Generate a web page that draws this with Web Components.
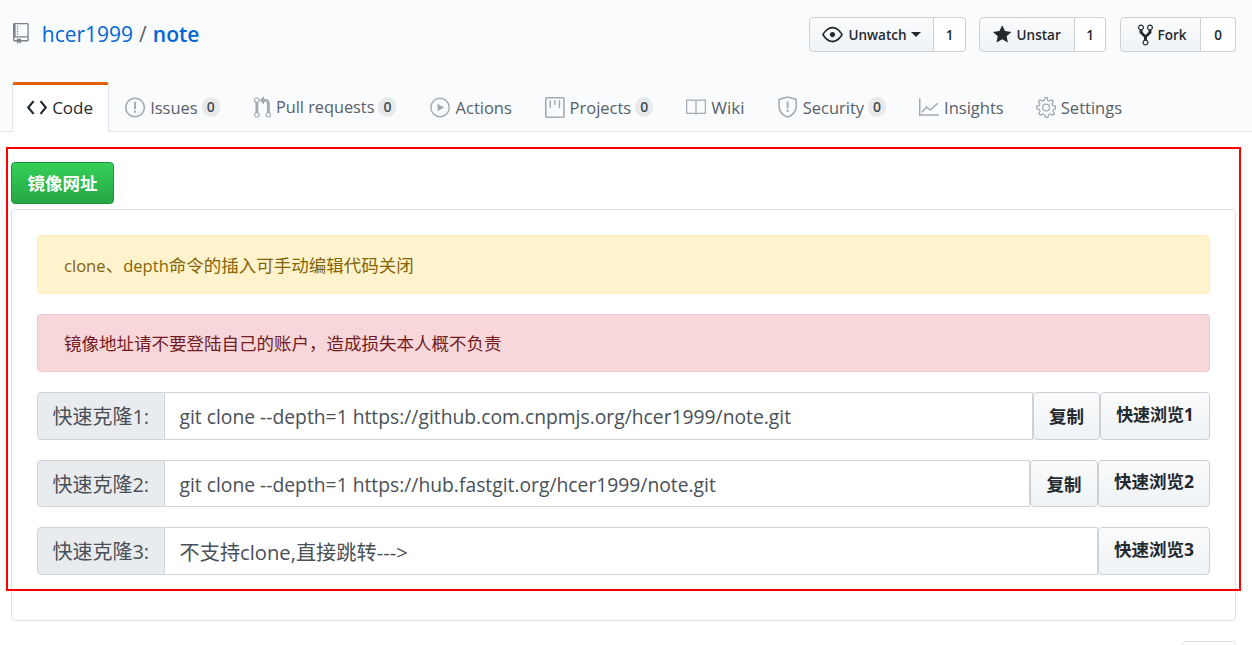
<!doctype html>
<html lang="zh-CN">
<head>
<meta charset="utf-8">
<title>hcer1999/note</title>
<style>
  html, body { margin: 0; height: 645px; overflow: hidden; background: #fff; }
  body { position: relative; font-family: "Open Sans", "Noto Sans CJK SC", sans-serif; color: #24292e; }
  .latin { font-size: 16.6px; }
</style>
</head>
<body>
<repo-header>
  <gh-action slot="actions" icon="eye" icon-size="21" count="1" caret main-width="125" count-width="32">Unwatch</gh-action>
  <gh-action slot="actions" icon="star" icon-size="21" count="1" main-width="96" count-width="31">Unstar</gh-action>
  <gh-action slot="actions" icon="fork" icon-size="24" count="0" main-width="81" count-width="35" style="margin-left:1px;--main-pad:3px">Fork</gh-action>
  <repo-tab slot="tabs" icon="code" icon-size="23" active style="font-size:17px;padding-right:15px">Code</repo-tab>
  <repo-tab slot="tabs" icon="issue" icon-size="23" count="0" style="margin-left:-1px">Issues</repo-tab>
  <repo-tab slot="tabs" icon="pr" icon-size="23" count="0" style="font-size:16.3px;padding:0 16px 2px">Pull requests</repo-tab>
  <repo-tab slot="tabs" icon="play" icon-size="23">Actions</repo-tab>
  <repo-tab slot="tabs" icon="project" icon-size="21" count="0">Projects</repo-tab>
  <repo-tab slot="tabs" icon="book" icon-size="20" style="font-size:17px">Wiki</repo-tab>
  <repo-tab slot="tabs" icon="shield" icon-size="22" count="0" style="margin-left:1px">Security</repo-tab>
  <repo-tab slot="tabs" icon="graph" icon-size="20">Insights</repo-tab>
  <repo-tab slot="tabs" icon="gear" icon-size="23" style="margin-left:-1px">Settings</repo-tab>
</repo-header>

<mirror-panel>
  <alert-box kind="warning" style="line-height:59px"><span class="latin">clone</span>、<span class="latin">depth</span>命令的插入可手动编辑代码关闭</alert-box>
  <alert-box kind="danger">镜像地址请不要登陆自己的账户，造成损失本人概不负责</alert-box>
  <clone-row label="快速克隆1:" copy copy-width="67" browse="快速浏览1" browse-width="110" browse-size="17" value-size="19.3">git clone --depth=1 https://github.com.cnpmjs.org/hcer1999/note.git</clone-row>
  <clone-row label="快速克隆2:" copy copy-width="68" browse="快速浏览2" browse-width="112" value-size="19.3">git clone --depth=1 https://hub.fastgit.org/hcer1999/note.git</clone-row>
  <clone-row label="快速克隆3:" browse="快速浏览3" browse-width="112" value-size="20.2">不支持clone,直接跳转---&gt;</clone-row>
</mirror-panel>

<red-outline></red-outline>

<script>
const ICONS = {
  repo: [12, 16, '<path fill="currentColor" d="M4 9H3V8h1v1zm0-3H3v1h1V6zm0-2H3v1h1V4zm0-2H3v1h1V2zm8-1v12c0 .55-.45 1-1 1H6v2l-1.5-1.5L3 16v-2H1c-.55 0-1-.45-1-1V1c0-.55.45-1 1-1h10c.55 0 1 .45 1 1zm-1 10H1v2h2v-1h3v1h5v-2zm0-10H2v9h9V1z"/>'],
  eye: [16, 16, '<path fill="currentColor" d="M8.06 2C3 2 0 8 0 8s3 6 8.06 6C13 14 16 8 16 8s-3-6-7.94-6zM8 12.6c-2.9 0-5.5-2.7-6.5-4.6 1-1.9 3.6-4.6 6.5-4.6s5.5 2.7 6.5 4.6c-1 1.9-3.6 4.6-6.5 4.6zM10 8c0 1.11-.89 2-2 2-1.11 0-2-.89-2-2 0-1.11.89-2 2-2 1.11 0 2 .89 2 2z"/>'],
  star: [14, 16, '<path fill="currentColor" d="M14 6l-4.9-.64L7 1 4.9 5.36 0 6l3.6 3.26L2.67 14 7 11.67 11.33 14l-.93-4.74L14 6z"/>'],
  fork: [10, 16, '<path fill="currentColor" d="M8 1a1.993 1.993 0 00-1 3.72V6L5 8 3 6V4.72A1.993 1.993 0 002 1a1.993 1.993 0 00-1 3.72V6.5l3 3v1.78A1.993 1.993 0 005 15a1.993 1.993 0 001-3.72V9.5l3-3V4.72A1.993 1.993 0 008 1zM2 4.2C1.34 4.2.8 3.65.8 3c0-.65.55-1.2 1.2-1.2.65 0 1.2.55 1.2 1.2 0 .65-.55 1.2-1.2 1.2zm3 10c-.66 0-1.2-.55-1.2-1.2 0-.65.55-1.2 1.2-1.2.65 0 1.2.55 1.2 1.2 0 .65-.55 1.2-1.2 1.2zm3-10c-.66 0-1.2-.55-1.2-1.2 0-.65.55-1.2 1.2-1.2.65 0 1.2.55 1.2 1.2 0 .65-.55 1.2-1.2 1.2z"/>'],
  code: [14, 16, '<path fill="none" stroke="currentColor" stroke-width="1.5" d="M4.6 3.6L.9 8l3.7 4.4M9.4 3.6L13.1 8l-3.7 4.4"/>'],
  issue: [14, 16, '<path fill="currentColor" d="M7 2.1c3.26 0 5.9 2.64 5.9 5.9s-2.64 5.9-5.9 5.9A5.91 5.91 0 011.1 8c0-3.26 2.64-5.9 5.9-5.9zM7 1C3.14 1 0 4.14 0 8s3.14 7 7 7 7-3.14 7-7-3.14-7-7-7zm.7 3H6.3v5h1.4V4zm0 6H6.3v1.6h1.4V10z"/>'],
  pr: [12, 16, '<path fill="currentColor" d="M11 11.28V5c-.03-.78-.34-1.47-.94-2.06C9.46 2.35 8.78 2.03 8 2H7V0L4 3l3 3V4h1c.27.02.48.11.69.31.21.2.3.42.31.69v6.28A1.993 1.993 0 0010 15a1.993 1.993 0 001-3.72zm-1 2.92c-.66 0-1.2-.55-1.2-1.2 0-.65.55-1.2 1.2-1.2.65 0 1.2.55 1.2 1.2 0 .65-.55 1.2-1.2 1.2zM4 3c0-1.11-.89-2-2-2a1.993 1.993 0 00-1 3.72v6.56A1.993 1.993 0 002 15a1.993 1.993 0 001-3.72V4.72c.59-.34 1-.98 1-1.72zm-.8 10c0 .66-.55 1.2-1.2 1.2-.65 0-1.2-.55-1.2-1.2 0-.65.55-1.2 1.2-1.2.65 0 1.2.55 1.2 1.2zM2 4.2C1.34 4.2.8 3.65.8 3c0-.65.55-1.2 1.2-1.2.65 0 1.2.55 1.2 1.2 0 .65-.55 1.2-1.2 1.2z"/>'],
  play: [14, 16, '<circle cx="7" cy="8" r="6.4" fill="none" stroke="currentColor" stroke-width="1"/><path fill="currentColor" d="M5.2 5.4v5.2L9.8 8z"/>'],
  project: [15, 16, '<rect x=".6" y=".6" width="13.8" height="14.8" rx=".6" fill="none" stroke="currentColor" stroke-width="1.2"/><path fill="none" stroke="currentColor" stroke-width="1.1" d="M4 2.5v6M7.5 2.5v3.5M11 2.5v6"/>'],
  book: [16, 16, '<path fill="none" stroke="currentColor" stroke-width="1" d="M8 3.4v10.4M8 3.4L7 2.5H.5v10.5H7l1 .8 1-.8h6.5V2.5H9z"/>'],
  shield: [14, 16, '<path fill="none" stroke="currentColor" stroke-width="1.1" d="M7 .8L.8 2.5v5.5c0 4.2 4.7 7.2 6.2 7.2s6.2-3 6.2-7.2V2.5L7 .8z"/><path fill="currentColor" d="M6.3 4h1.4v5H6.3zM6.3 10h1.4v1.6H6.3z"/>'],
  graph: [16, 16, '<path fill="none" stroke="currentColor" stroke-width="1.2" d="M.6 1v13.4H16M2.5 12l3.5-4 3 2.5L15 5"/>'],
  gear: [14, 16, '<path fill="none" stroke="currentColor" stroke-width=".9" d="M13.5 8.8V7.2l-1.8-.6-.5-1.2.8-1.7-1.1-1.1-1.7.9-1.2-.5L7.9 1.2H6.3l-.6 1.8-1.2.5-1.7-.8-1.1 1.1.9 1.7-.5 1.2L.5 7.2v1.6l1.8.6.5 1.2-.8 1.7 1.1 1.1 1.7-.9 1.2.5.6 1.8h1.6l.6-1.8 1.2-.5 1.7.8 1.1-1.1-.9-1.7.5-1.2 1.8-.5z"/><circle cx="7" cy="8" r="2.4" fill="none" stroke="currentColor" stroke-width=".9"/>']
};

function iconSvg(name, height) {
  const [w, h, body] = ICONS[name];
  const width = w * height / h;
  return `<svg width="${width}" height="${height}" viewBox="0 0 ${w} ${h}" aria-hidden="true">${body}</svg>`;
}

class RepoHeader extends HTMLElement {
  connectedCallback() {
    this.attachShadow({ mode: 'open' });
    this.shadowRoot.innerHTML = `
      <style>
        :host { display: block; height: 132px; box-sizing: border-box; background: #fafbfc; border-bottom: 1px solid #e1e4e8; }
        .top { display: flex; align-items: center; justify-content: space-between; height: 82px; padding: 0 16px 13px 13px; box-sizing: border-box; }
        .title { display: flex; align-items: center; font-size: 21px; color: #586069; padding-bottom: 2px; }
        .title svg { color: #7b828a; margin-right: 13px; }
        a { color: #0366d6; text-decoration: none; }
        .sep { margin: 0 6px; }
        b { font-weight: 600; }
        .actions { display: flex; gap: 13px; }
        .tabs { display: flex; gap: 1px; height: 50px; padding-left: 12px; }
      </style>
      <div class="top">
        <div class="title">${iconSvg('repo', 21)}<a href="#">hcer1999</a><span class="sep">/</span><a href="#"><b>note</b></a></div>
        <div class="actions"><slot name="actions"></slot></div>
      </div>
      <nav class="tabs"><slot name="tabs"></slot></nav>
    `;
  }
}

class GhAction extends HTMLElement {
  connectedCallback() {
    this.attachShadow({ mode: 'open' });
    const mainW = this.getAttribute('main-width');
    const countW = this.getAttribute('count-width');
    const caret = this.hasAttribute('caret') ? '<i class="caret"></i>' : '';
    this.shadowRoot.innerHTML = `
      <style>
        :host { display: flex; height: 35px; font-size: 13.5px; font-weight: 600; color: #24292e; }
        .main, .count { display: flex; align-items: center; justify-content: center; box-sizing: border-box; border: 1px solid #ced1d4; }
        .main { width: ${mainW}px; gap: 5px; padding-left: var(--main-pad, 0); background: linear-gradient(#fafbfc, #eff3f6); border-radius: 4px 0 0 4px; }
        .count { width: ${countW}px; background: #fff; border-left: 0; border-radius: 0 4px 4px 0; }
        .caret { border: 5px solid transparent; border-top-color: #24292e; border-bottom: 0; margin-left: -1px; }
      </style>
      <div class="main">${iconSvg(this.getAttribute('icon'), this.getAttribute('icon-size'))}<slot></slot>${caret}</div>
      <div class="count">${this.getAttribute('count')}</div>
    `;
  }
}

class RepoTab extends HTMLElement {
  connectedCallback() {
    this.attachShadow({ mode: 'open' });
    const count = this.getAttribute('count');
    this.shadowRoot.innerHTML = `
      <style>
        :host { display: flex; align-items: center; gap: 5px; height: 50px; box-sizing: border-box; padding: 0 15px 2px; border: 1px solid transparent; border-top-width: 3px; font-size: 16.5px; color: #586069; }
        :host([active]) { padding: 0 14px 2px; background: #fff; color: #24292e; border-color: #e36209 #e1e4e8 #fff; border-radius: 3px 3px 0 0; }
        svg { color: #a3aab1; flex: none; }
        :host([active]) svg { color: #24292e; }
        .count { min-width: 18px; height: 20px; line-height: 20px; margin-left: -1px; border-radius: 10px; background: rgba(27,31,35,.08); font-size: 14px; font-weight: 600; text-align: center; color: #444d56; }
      </style>
      ${iconSvg(this.getAttribute('icon'), this.getAttribute('icon-size'))}<slot></slot>${count !== null ? `<span class="count">${count}</span>` : ''}
    `;
  }
}

class MirrorPanel extends HTMLElement {
  connectedCallback() {
    this.attachShadow({ mode: 'open' });
    this.shadowRoot.innerHTML = `
      <style>
        :host { display: block; padding: 30px 16px 0 11px; }
        .tab { display: block; width: 103px; height: 42px; box-sizing: border-box; line-height: 40px; text-align: center; font-size: 17.5px; font-weight: 700; color: #fff; background: linear-gradient(#34d058, #28a745); border: 1px solid #22903a; border-radius: 4px; margin-bottom: 5px; }
        .body { display: flex; flex-direction: column; gap: 20px; height: 412px; box-sizing: border-box; padding: 25px 25px 0; border: 1px solid #dfe2e5; border-radius: 4px; }
        .more { width: 54px; height: 30px; box-sizing: border-box; margin: 20px 0 0 auto; border: 1px solid #dfe2e5; border-radius: 4px; background: #fff; }
      </style>
      <div class="tab">镜像网址</div>
      <div class="body"><slot></slot></div>
      <div class="more"></div>
    `;
  }
}

class AlertBox extends HTMLElement {
  connectedCallback() {
    this.attachShadow({ mode: 'open' });
    this.shadowRoot.innerHTML = `
      <style>
        :host { display: block; height: 58.5px; line-height: 57.5px; box-sizing: border-box; padding: 0 26px; border: 1px solid; border-radius: 4px; font-size: 17.5px; }
        :host([kind=warning]) { background: #fff3cd; border-color: #ffeeba; color: #856404; }
        :host([kind=danger]) { background: #f8d7da; border-color: #f5c6cb; color: #721c24; }
      </style>
      <slot></slot>
    `;
  }
}

class CloneRow extends HTMLElement {
  connectedCallback() {
    this.attachShadow({ mode: 'open' });
    const copy = this.hasAttribute('copy')
      ? `<div class="btn copy" style="width:${this.getAttribute('copy-width')}px">复制</div>` : '';
    const browseSize = this.getAttribute('browse-size') ?? '17.5';
    this.shadowRoot.innerHTML = `
      <style>
        :host { display: flex; height: 47.5px; font-size: 20px; color: #495057; }
        .label { display: flex; align-items: center; justify-content: center; flex: none; width: 127.5px; box-sizing: border-box; background: #e9ecef; border: 1px solid #ced4da; border-radius: 4px 0 0 4px; }
        .value { display: flex; align-items: center; flex: 1; min-width: 0; box-sizing: border-box; padding: 2px 15px 0; border: 1px solid #ced4da; border-left: 0; background: #fff; font-size: ${this.getAttribute('value-size')}px; }
        .btn { display: flex; align-items: center; justify-content: center; flex: none; box-sizing: border-box; border: 1px solid #ccd0d4; border-radius: 4px; background: linear-gradient(#fafbfc, #eff3f6); color: #24292e; font-size: 17.5px; font-weight: 700; }
        .browse { width: ${this.getAttribute('browse-width')}px; font-size: ${browseSize}px; padding-bottom: 5px; }
      </style>
      <div class="label">${this.getAttribute('label')}</div>
      <div class="value"><slot></slot></div>
      ${copy}
      <div class="btn browse">${this.getAttribute('browse')}</div>
    `;
  }
}

// the red frame was drawn over the page, so it sits on top of the content
class RedOutline extends HTMLElement {
  connectedCallback() {
    this.attachShadow({ mode: 'open' });
    this.shadowRoot.innerHTML = `
      <style>
        :host { position: absolute; left: 6px; top: 147px; width: 1235px; height: 444px; box-sizing: border-box; border: 2px solid #f00; pointer-events: none; }
      </style>
    `;
  }
}

customElements.define('repo-header', RepoHeader);
customElements.define('gh-action', GhAction);
customElements.define('repo-tab', RepoTab);
customElements.define('mirror-panel', MirrorPanel);
customElements.define('alert-box', AlertBox);
customElements.define('clone-row', CloneRow);
customElements.define('red-outline', RedOutline);
</script>
</body>
</html>
